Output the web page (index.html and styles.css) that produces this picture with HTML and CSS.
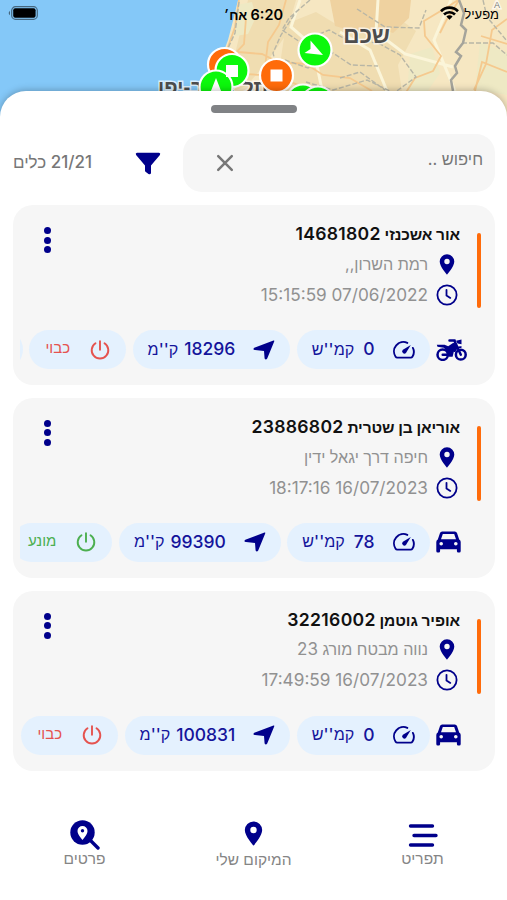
FILE: index.html
```
<!DOCTYPE html>
<html lang="he" dir="rtl">
<head>
    <meta charset="UTF-8">
    <meta name="viewport" content="width=device-width, initial-scale=1.0">
    <title>כלים</title>
    <link rel="stylesheet" href="styles.css">
</head>
<body>
    <!-- icons -->
    <svg class="sprite" aria-hidden="true">
        <symbol id="pin" viewBox="0 0 16 21">
            <path fill-rule="evenodd" d="M8 .3A7.3 7.3 0 0 0 .7 7.6C.7 12.800 8 20.700 8 20.700s7.300-7.900 7.300-13.100A7.300 7.300 0 0 0 8 .3zm0 4.500a2.700 2.700 0 1 1 0 5.400 2.700 2.700 0 0 1 0-5.400z"/>
        </symbol>
        <symbol id="clock" viewBox="0 0 22 22">
            <g fill="none" stroke="currentColor" stroke-width="1.8" stroke-linecap="round">
                <circle cx="11" cy="11" r="9.600"/>
                <path d="M10.500 5.800v5.600l3.800 2.500"/>
            </g>
        </symbol>
        <symbol id="gauge" viewBox="0 0 22 18">
            <path d="M14.300 1.900A9.400 9.400 0 0 0 2.600 15.700q.6.900 1.600.9h13.600q1 0 1.600-.9a9 9 0 0 0 .5-8.800" fill="none" stroke="currentColor" stroke-width="1.900" stroke-linecap="round"/>
            <path d="M17.800 3.900l-4.700 7.900a2.200 2.200 0 1 1-3.200-3z"/>
        </symbol>
        <symbol id="arrow" viewBox="0 0 22 20">
            <path d="M20.500.5Q21.700.2 21.200 1.500L14.200 18.500q-1.400 2-2.600 0L11 11 2 10.100Q-.8 9.300 1.300 7.700z"/>
        </symbol>
        <symbol id="power" viewBox="0 0 20 20">
            <path d="M5.500 3.300a8.300 8.300 0 1 0 9 0M10 1.200v8.600" fill="none" stroke="currentColor" stroke-width="1.900" stroke-linecap="round"/>
        </symbol>
        <symbol id="car" viewBox="0 0 25 22">
            <path fill-rule="evenodd" d="M6.200.5h12.600q1.600 0 2.200 1.500l2.200 6.500q1.500.8 1.500 2.500v9q0 1.500-1.400 1.500h-1q-1.400 0-1.400-1.500v-1.800H4.100V20q0 1.500-1.400 1.500h-1Q.3 21.500.3 20v-9q0-1.700 1.500-2.500L4 2Q4.600.5 6.200.5zm.6 2.400L5 8.200h15l-1.800-5.300zM5.200 11a1.800 1.800 0 1 0 0 3.600 1.800 1.800 0 0 0 0-3.600zm14.600 0a1.800 1.800 0 1 0 0 3.600 1.800 1.800 0 0 0 0-3.600z"/>
        </symbol>
        <symbol id="bike" viewBox="0 0 31 22">
            <g fill="none" stroke="currentColor" stroke-width="2.500">
                <circle cx="6.700" cy="15.700" r="5.200"/>
                <circle cx="24.800" cy="15.700" r="4.900"/>
                <path d="M6.700 15.700h5M18.500 2l6.300 13.700M13.500 1.500h5.200" stroke-linecap="round"/>
                <path d="M18.500 13a6.500 6.500 0 0 1 7-4.800" stroke-width="1.800"/>
            </g>
            <path d="M.8 5.700h7.800l3.600 1.500 4.800-3.200 3 .3 1.800 5-4 3.500-1.200 5h-4l-1.200-5-3.500-4L1.500 7.800zM20 1.800l5.500-1.300v4.700l-4-.6z"/>
        </symbol>
    </svg>

    <div class="map">
        <svg class="map-tiles" viewBox="0 0 507 125" direction="ltr">
            <rect width="507" height="125" fill="#84c8f8"/>
            <path d="M238 0L234 17 228 40 219 64 207 92 200 125H507V0z" fill="#f6e7c2"/>
            <path d="M248 0h48l-10 35-22 31-18 20-20 8 9-40zM286 24l30-12 28 17 50-14 22 16-18 34 6 40H274z" fill="#f0ddb1"/>
            <path d="M330 0h81l-2 18-16 15-13-4-17 5-28-8z" fill="#efd2a0"/>
            <path d="M237 5l15-3 4 15-8 17-13 2zM410 54l22-7 8 26-15 22h-18zM480 42l27 11v42l-32-6z" fill="#eee9c4"/>
            <g fill="none" stroke="#fbf5d9" stroke-width="3">
                <path d="M300 0l-9 27 22 19 9 44M340 32l30 18 17 41M378 0l-2 32 29 22 48 13M451 0l-17 40 21 51"/>
            </g>
            <g fill="none" stroke="#f5c98e" stroke-width="1.800">
                <path d="M239 0l-4 27-13 37M246 18l-2 26-17 18 18 12 31 2 37 15M286 0l-7 25-11 17-3 25M238 52l24 2 16 8 28 2 17 11 27 3 22 13M405 94l10-16 18-7 8-15-16-20-1-15 25-15 9-6M459 0l-13 21-6 12M475 91l7-29 25 10M507 19l-15 11-6 34-12 26M507 44l-26-8"/>
            </g>
            <g fill="none" stroke="#b8b6a6" stroke-width="1.400" stroke-dasharray="5 2">
                <path d="M239 2l-4 31-11 24M294 15l-13 20-8 18 4 15M310 0l-21 18-7 12 18 12 29-12 18 10 31 3 22 12 16 22-22 16-27-13-34 10-27-8M285 60l23 8 25-15 18 12 27 1M357 9l28 18 34 1 7-18M462 43h31l14 12M483 0l4 17 20 24M340 78l20-6 25 18"/>
            </g>
            <path d="M459 0l5 13-3 12 5 5-3 13-7 9 5 4-6 10 2 7-6 7 2 11" fill="none" stroke="#a5a49b" stroke-width="2.500"/>
            <g class="place">
                <text x="390" y="43" font-size="22.500" text-anchor="start" direction="rtl">שכם</text>
                <text x="268" y="94" font-size="20.500" text-anchor="start" direction="rtl">תל אביב-יפו</text>
                <text class="small" x="494" y="8" font-size="9">A</text>
            </g>
            <g stroke="#fff" stroke-width="2.200">
                <circle cx="224.500" cy="64.500" r="16.500" fill="#ff6b0a"/>
                <circle cx="232" cy="70.500" r="16.500" fill="#0cf80c"/>
                <circle cx="216" cy="87" r="16.500" fill="#0cf80c"/>
                <circle cx="315" cy="50" r="16.500" fill="#0cf80c"/>
                <circle cx="276.500" cy="75.500" r="16.500" fill="#ff6b0a"/>
                <circle cx="303" cy="101" r="16.500" fill="#0cf80c"/>
                <circle cx="318" cy="103" r="16.500" fill="#0cf80c"/>
            </g>
            <path d="M226 65h12v12h-12zM270.500 69.500h12v12h-12zM216 78l7 18-7-4-7 4zM310.500 40.500l12.500 14.500-18.500-2 6-4z" fill="#fff"/>
        </svg>
        <div class="status-bar">
            <div class="carrier">
                <span>מפעיל</span>
                <svg width="19" height="14" viewBox="0 0 19 14">
                    <g fill="none" stroke="#000" stroke-width="2.700">
                        <path d="M1 5.200a12 12 0 0 1 17 0M4 8.500a7.800 7.800 0 0 1 11 0"/>
                    </g>
                    <path d="M6.400 10.500a4.400 4.400 0 0 1 6.200 0L9.500 13.800z"/>
                </svg>
            </div>
            <div class="time"><b>6:20</b> אח׳</div>
            <svg class="battery" width="30" height="14" viewBox="0 0 30 14">
                <rect x="3.700" y=".7" width="25.600" height="12.600" rx="3.800" fill="none" stroke="#45677f" stroke-width="1.200"/>
                <rect x="5.200" y="2.200" width="22.400" height="9.600" rx="2"/>
                <path d="M2 4.700q-2.600 2.300 0 4.600z" fill="#45677f"/>
            </svg>
        </div>
    </div>

    <main class="sheet">
        <div class="handle"></div>
        <div class="toolbar">
            <div class="search">
                <span>חיפוש ..</span>
                <svg width="18" height="18" viewBox="0 0 18 18">
                    <path d="M2.200 2.200l13.600 13.600M15.800 2.200L2.200 15.800" stroke="#777" stroke-width="2.500" stroke-linecap="round"/>
                </svg>
            </div>
            <svg class="filter" width="26" height="23" viewBox="0 0 26 23">
                <path d="M2 .8h22q2 .5.900 2.200L16 13.500v7.700q-.8 1.800-2.500.8l-3-2.200q-.5-.4-.5-1V13.500L1.100 3Q0 1.300 2 .8z"/>
            </svg>
            <div class="count">21/21 כלים</div>
        </div>

        <div class="cards">
            <div class="card">
                <div class="card-top">
                    <div class="stripe"></div>
                    <div class="info">
                        <div class="name">אור אשכנזי <b>14681802</b></div>
                        <div class="line"><svg class="pin"><use href="#pin"/></svg><span class="address">רמת השרון,,</span></div>
                        <div class="line"><svg class="clock"><use href="#clock"/></svg><span>07/06/2022 15:15:59</span></div>
                    </div>
                    <div class="dots"><i></i><i></i><i></i></div>
                </div>
                <div class="pills">
                    <svg class="bike"><use href="#bike"/></svg>
                    <div class="pill"><svg class="gauge"><use href="#gauge"/></svg><b>0</b><span class="unit">קמ''ש</span></div>
                    <div class="pill"><svg class="arrow"><use href="#arrow"/></svg><b>18296</b><span class="km">ק''מ</span></div>
                    <div class="pill state off"><svg class="power"><use href="#power"/></svg><span>כבוי</span></div>
                    <div class="pill more"></div>
                </div>
            </div>

            <div class="card">
                <div class="card-top">
                    <div class="stripe"></div>
                    <div class="info">
                        <div class="name">אוריאן בן שטרית <b>23886802</b></div>
                        <div class="line"><svg class="pin"><use href="#pin"/></svg><span class="address">חיפה דרך יגאל ידין</span></div>
                        <div class="line"><svg class="clock"><use href="#clock"/></svg><span>16/07/2023 18:17:16</span></div>
                    </div>
                    <div class="dots"><i></i><i></i><i></i></div>
                </div>
                <div class="pills">
                    <svg class="car"><use href="#car"/></svg>
                    <div class="pill"><svg class="gauge"><use href="#gauge"/></svg><b>78</b><span class="unit">קמ''ש</span></div>
                    <div class="pill"><svg class="arrow"><use href="#arrow"/></svg><b>99390</b><span class="km">ק''מ</span></div>
                    <div class="pill state on"><svg class="power"><use href="#power"/></svg><span>מונע</span></div>
                </div>
            </div>

            <div class="card">
                <div class="card-top">
                    <div class="stripe"></div>
                    <div class="info">
                        <div class="name">אופיר גוטמן <b>32216002</b></div>
                        <div class="line"><svg class="pin"><use href="#pin"/></svg><span class="address">נווה מבטח מורג <b>23</b></span></div>
                        <div class="line"><svg class="clock"><use href="#clock"/></svg><span>16/07/2023 17:49:59</span></div>
                    </div>
                    <div class="dots"><i></i><i></i><i></i></div>
                </div>
                <div class="pills">
                    <svg class="car"><use href="#car"/></svg>
                    <div class="pill"><svg class="gauge"><use href="#gauge"/></svg><b>0</b><span class="unit">קמ''ש</span></div>
                    <div class="pill"><svg class="arrow"><use href="#arrow"/></svg><b>100831</b><span class="km">ק''מ</span></div>
                    <div class="pill state off"><svg class="power"><use href="#power"/></svg><span>כבוי</span></div>
                </div>
            </div>
        </div>

        <nav class="tabs">
            <a class="tab">
                <svg width="30" height="30" viewBox="0 0 30 30">
                    <path d="M2.500 6h22M6 15.500h22M2.500 25h22" stroke="#00008b" stroke-width="3.400" stroke-linecap="round"/>
                </svg>
                <span>תפריט</span>
            </a>
            <a class="tab">
                <svg class="tab-pin"><use href="#pin"/></svg>
                <span>המיקום שלי</span>
            </a>
            <a class="tab">
                <svg width="30" height="30" viewBox="0 0 30 30">
                    <path d="M20 20l8 8" stroke="#00008b" stroke-width="3.400" stroke-linecap="round"/>
                    <circle cx="12.500" cy="12.500" r="12.200"/>
                    <path d="M12.500 6a5 5 0 0 0-5 5c0 3.500 5 9 5 9s5-5.500 5-9a5 5 0 0 0-5-5z" fill="#fff"/>
                    <circle cx="12.500" cy="10.800" r="1.700"/>
                </svg>
                <span>פרטים</span>
            </a>
        </nav>
    </main>
</body>
</html>
```
FILE: styles.css
```
* {
    box-sizing: border-box;
}

body {
    font-family: Inter, "Liberation Sans", Arial, sans-serif;
    margin: 0;
    width: 507px;
    height: 900px;
    overflow: hidden;
    background-color: #fff;
    color: #111;
}

svg {
    display: block;
    flex-shrink: 0;
    fill: #00008b;
    color: #00008b;
}

.sprite {
    position: absolute;
    width: 0;
    height: 0;
}

.map {
    height: 91px;
    position: relative;
}

.map-tiles {
    position: absolute;
    top: 0;
    left: 0;
    width: 507px;
    height: 125px;
}

.place {
    font-family: "Liberation Sans", Arial, sans-serif;
    font-weight: bold;
    fill: #4d4d4d;
    stroke: rgba(255, 255, 255, 0.7);
    stroke-width: 3px;
    paint-order: stroke;
}

.place .small {
    fill: #777;
    font-weight: normal;
}

.status-bar {
    position: relative;
    display: grid;
    grid-template-columns: 1fr auto 1fr;
    align-items: center;
    height: 28px;
    padding: 0 8px;
    font-size: 14px;
    color: #000;
}

.status-bar svg {
    fill: #000;
}

.carrier {
    display: flex;
    align-items: center;
    gap: 5px;
    font-size: 13px;
    line-height: 13px;
}

.carrier svg {
    margin-top: -2px;
}

.time {
    font-weight: 600;
    font-size: 13px;
}

.time b {
    font-weight: 600;
    font-size: 14.5px;
}

.battery {
    justify-self: end;
    margin-top: -2px;
}

.sheet {
    position: relative;
    height: 809px;
    background-color: #fff;
    border-radius: 26px 26px 0 0;
    box-shadow: 0 -1px 7px rgba(0, 0, 0, 0.25);
    padding: 14px 12px 0 13px;
}

.handle {
    width: 86px;
    height: 8px;
    margin: 0 auto;
    border-radius: 4px;
    background-color: #808285;
}

.toolbar {
    display: flex;
    align-items: center;
    height: 58px;
    margin-top: 21px;
}

.search {
    display: flex;
    justify-content: space-between;
    align-items: center;
    width: 312px;
    height: 58px;
    padding: 0 12px 0 33px;
    border-radius: 19px;
    background-color: #f6f6f6;
    color: #777;
    font-size: 16.5px;
}

.search span {
    margin-top: -8px;
}

.filter {
    margin-right: 22px;
}

.count {
    margin: -2px auto 0 0;
    color: #777;
    font-size: 17px;
    font-weight: 500;
}

.cards {
    display: flex;
    flex-direction: column;
    gap: 12.5px;
    margin-top: 13px;
}

.card {
    height: 180.3px;
    padding: 19px 0 0 7px;
    border-radius: 20px;
    background-color: #f6f6f6;
}

.card-top {
    display: flex;
    height: 94px;
    padding: 0 14px 0 24px;
}

.stripe {
    width: 4px;
    height: 75px;
    margin-top: 9px;
    border-radius: 2px;
    background-color: #ff6b0a;
}

.info {
    flex: 1;
    padding-right: 17px;
}

.name {
    height: 25px;
    line-height: 20px;
    font-size: 15.5px;
    font-weight: 600;
    letter-spacing: -0.1px;
}

.name b {
    font-size: 17.6px;
    font-weight: 600;
    letter-spacing: 0.3px;
}

.line {
    display: flex;
    align-items: center;
    height: 30.5px;
    gap: 8px;
    color: #919191;
    font-size: 17.2px;
}

.line span {
    margin-top: -1px;
}

.line .address {
    font-size: 16.1px;
}

.address b {
    font-size: 17px;
    font-weight: 400;
}

.pin {
    width: 16px;
    height: 21px;
    margin: 0 5px 0 3px;
}

.clock {
    width: 22px;
    height: 22px;
    margin: 0 2px 0 0;
}

.dots {
    display: flex;
    flex-direction: column;
    gap: 2.500px;
    width: 7px;
    margin-top: 3px;
}

.dots i {
    width: 7px;
    height: 7px;
    border-radius: 50%;
    background-color: #00008b;
}

.pills {
    display: flex;
    align-items: center;
    gap: 6.5px;
    height: 39px;
    margin-top: 12px;
    padding-right: 28px;
    overflow: hidden;
}

.bike {
    width: 31px;
    height: 22px;
}

.car {
    width: 25px;
    height: 22px;
    margin: 0 6px 0 0;
}

.pill {
    display: flex;
    align-items: center;
    flex-shrink: 0;
    height: 39px;
    padding: 0 15px;
    border-radius: 20px;
    background-color: #e4f1fe;
    color: #14149b;
    font-size: 16.1px;
    font-weight: 500;
    white-space: nowrap;
}

.pill b {
    margin: -2px 18px 0 0;
    font-size: 17.5px;
    font-weight: 500;
}

.pill span {
    margin-top: -2px;
}

.pill .unit {
    margin-right: 9px;
}

.pill .km {
    margin-right: 6px;
}

.gauge {
    width: 22px;
    height: 18px;
}

.arrow {
    width: 22px;
    height: 20px;
}

.power {
    width: 20px;
    height: 20px;
}

.state {
    padding: 0 16px;
    font-size: 15px;
    font-weight: 400;
}

.state span {
    margin: -4px 20px 0 0;
}

.off,
.off svg {
    color: #e5534f;
}

.on,
.on svg {
    color: #4caf50;
}

.more {
    width: 90px;
}

.tabs {
    display: flex;
    margin: 49px -12px 0 -13px;
}

.tab {
    flex: 1;
    display: flex;
    flex-direction: column;
    align-items: center;
    height: 50px;
    color: #858585;
    font-size: 15.500px;
    line-height: 17px;
}

.tab-pin {
    width: 19px;
    height: 25px;
    margin: 1px 0 5px;
}
```
